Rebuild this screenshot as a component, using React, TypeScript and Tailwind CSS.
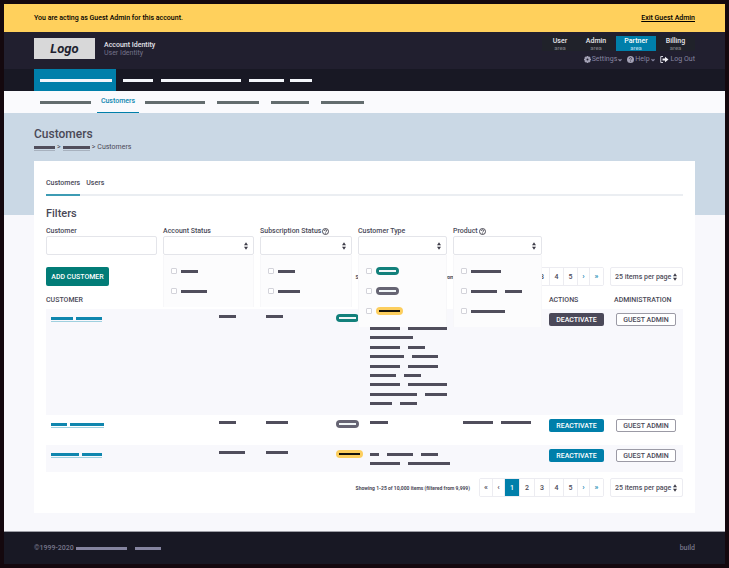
import React, { useState } from "react";

type Tone = "teal" | "gray" | "yellow";

const barTones = {
  dark: "bg-[#504e5c]",
  light: "bg-[#f3f6fb]",
  slate: "bg-[#636c6e]",
  link: "bg-[#0f86ae]",
  muted: "bg-[#8584a0]",
};

function Bars({ widths, tone = "dark", gap = "gap-2" }: { widths: number[]; tone?: keyof typeof barTones; gap?: string }) {
  return (
    <span className={`flex ${gap}`}>
      {widths.map((w, i) => (
        <span key={i} className={`block h-[3px] shrink-0 ${barTones[tone]}`} style={{ width: w }} />
      ))}
    </span>
  );
}

function Badge({ tone }: { tone: Tone }) {
  const outer = {
    teal: "bg-[#12807b] w-[23px]",
    gray: "bg-[#666473] w-[23px]",
    yellow: "bg-[#fcce5e] w-[27px]",
  }[tone];
  return (
    <span className={`flex h-2 items-center rounded-full px-[3px] ${outer}`}>
      <span className={`block h-[2px] w-full ${tone === "yellow" ? "bg-[#14120c]" : "bg-[#f2f7f8]"}`} />
    </span>
  );
}

function SortArrows() {
  return (
    <svg viewBox="0 0 4 8" className="pointer-events-none absolute top-1/2 right-[6px] h-2 w-1 -translate-y-1/2" aria-hidden="true">
      <path d="M2 0.3 4 3.3H0zM2 7.7 0 4.7h4z" fill="#3e3d49" />
    </svg>
  );
}

function HelpIcon() {
  return (
    <svg viewBox="0 0 14 14" className="h-[7px] w-[7px]" fill="none" stroke="#3a3945" strokeWidth="1.8" aria-hidden="true">
      <circle cx="7" cy="7" r="6" />
      <path d="M4.800 5.600a2.200 2 0 1 1 3 1.800c-.6.3-.8.6-.8 1.200M7 9.900v1.300" />
    </svg>
  );
}

function FilterSelect({ id, label, help, children }: { id: string; label: string; help?: boolean; children: React.ReactNode }) {
  return (
    <div className="relative min-w-0">
      <label htmlFor={id} className="flex h-2 items-center gap-px whitespace-nowrap">
        {label}
        {help && <HelpIcon />}
      </label>
      <div className="relative mt-px">
        <select id={id} className="block h-[19px] w-full appearance-none rounded-[2px] border border-[#e4e5ea] bg-white">
          <option value="" />
        </select>
        <SortArrows />
      </div>
      <ul className="absolute top-full left-0 z-10 w-full border-x border-[#f7f7f9] bg-[#fcfcfd] pt-[6px] pb-[6px] pl-[7px]">
        {children}
      </ul>
    </div>
  );
}

function Option({ name, children }: { name: string; children: React.ReactNode }) {
  return (
    <li>
      <label className="flex h-5 items-center gap-1">
        <input type="checkbox" aria-label={name} className="size-[6px] shrink-0 appearance-none rounded-[1px] border border-[#d3d3da] bg-white checked:bg-[#007faa]" />
        {children}
      </label>
    </li>
  );
}

const pages = [
  { label: "«", style: "w-[13px] bg-white text-[8px]" },
  { label: "‹", style: "w-3 bg-white text-[8px]" },
  { label: "1", style: "w-[15px] bg-[#007faa] text-white" },
  { label: "2", style: "w-[15px] bg-white" },
  { label: "3", style: "w-[15px] bg-white" },
  { label: "4", style: "w-[14px] bg-white" },
  { label: "5", style: "w-[14px] bg-white" },
  { label: "›", style: "w-3 bg-white text-[8px] text-[#0e86b0]" },
  { label: "»", style: "w-[13px] bg-white text-[8px] text-[#0e86b0]" },
];

function Pager({ id }: { id: string }) {
  return (
    <div className="flex items-center justify-end">
      <p className="mr-[9px] text-[5px] font-bold whitespace-nowrap">Showing 1-25 of 10,000 items (filtered from 9,999)</p>
      <nav aria-label="Pages" className="flex h-[19px] divide-x divide-[#ececf1] rounded-[2px] border border-[#ececf1]">
        {pages.map((p) => (
          <button key={p.label} type="button" className={`h-full font-medium ${p.style}`}>
            {p.label}
          </button>
        ))}
      </nav>
      <div className="relative ml-[6px]">
        <select id={id} aria-label="Items per page" className="block h-[19px] w-[73px] appearance-none rounded-[2px] border border-[#ececf1] bg-white px-1 font-medium text-[#504e5c]">
          <option>25 items per page</option>
          <option>50 items per page</option>
        </select>
        <SortArrows />
      </div>
    </div>
  );
}

interface Row {
  id: string;
  link: number[];
  account: number;
  subscription: number;
  badge: Tone;
  types: number[][];
  typesClass: string;
  product: number[];
  active: boolean;
  height: string;
}

const rows: Row[] = [
  {
    id: "r1",
    link: [22, 26],
    account: 17,
    subscription: 17,
    badge: "teal",
    types: [[30, 39], [43], [30, 17], [34, 26], [30, 30], [26, 17], [30, 39], [47, 22], [22, 17]],
    typesClass: "mt-[14px] h-[78px]",
    product: [],
    active: true,
    height: "h-[106px]",
  },
  { id: "r2", link: [16, 34], account: 17, subscription: 22, badge: "gray", types: [[18]], typesClass: "mt-[2px]", product: [30, 30], active: false, height: "h-[30px]" },
  { id: "r3", link: [28, 20], account: 26, subscription: 22, badge: "yellow", types: [[9, 26, 17], [30, 42]], typesClass: "mt-1 h-3", product: [], active: false, height: "h-[27px]" },
];

const columns = ["w-[168px]", "w-[47px]", "w-[70px]", "w-[34px]", "w-[93px]", "w-[86px]", "w-[65px]", "w-[74px]"];

function CustomerTable() {
  return (
    <table className="mt-[10px] w-full table-fixed text-left">
      <colgroup>
        {columns.map((c, i) => (
          <col key={i} className={c} />
        ))}
      </colgroup>
      <thead>
        <tr className="h-[13px] align-top leading-2">
          <th scope="col" className="font-medium">CUSTOMER</th>
          <td colSpan={5} />
          <th scope="col" className="pl-[5px] font-medium">ACTIONS</th>
          <th scope="col" className="pl-[5px] font-medium">ADMINISTRATION</th>
        </tr>
      </thead>
      <tbody className="[&>tr:nth-child(odd)]:bg-[#f8f8fc] [&_td]:pt-1 [&_td]:pl-[5px] [&_td:last-child]:pl-[7px]">
        {rows.map((r) => (
          <tr key={r.id} className={`align-top ${r.height}`}>
            <td>
              <a href="#" aria-label="Customer" className="mt-1 inline-block border-b border-[#9fd0df] pb-px align-top">
                <Bars widths={r.link} tone="link" gap="gap-[3px]" />
              </a>
            </td>
            <td><div className="pt-[2px]"><Bars widths={[r.account]} /></div></td>
            <td><div className="pt-[2px]"><Bars widths={[r.subscription]} /></div></td>
            <td><div className="pt-px"><Badge tone={r.badge} /></div></td>
            <td>
              <div className={`flex flex-col justify-between ${r.typesClass}`}>
                {r.types.map((t, i) => (
                  <Bars key={i} widths={t} />
                ))}
              </div>
            </td>
            <td><div className="pt-[2px]"><Bars widths={r.product} /></div></td>
            <td>
              <button type="button" className={`block h-[13px] w-[55px] rounded-[2px] font-medium text-white ${r.active ? "bg-[#4b4959]" : "bg-[#007faa]"}`}>
                {r.active ? "DEACTIVATE" : "REACTIVATE"}
              </button>
            </td>
            <td>
              <button type="button" className="block h-[13px] w-[60px] rounded-[2px] border border-[#9b9aa5] bg-white font-medium">GUEST ADMIN</button>
            </td>
          </tr>
        ))}
      </tbody>
    </table>
  );
}

function Chevron() {
  return (
    <svg viewBox="0 0 8 8" className="size-1" fill="none" stroke="currentColor" strokeWidth="2.2" aria-hidden="true">
      <path d="m1 2.500 3 3 3-3" />
    </svg>
  );
}

const areas = [
  { name: "User", width: "w-9" },
  { name: "Admin", width: "w-9" },
  { name: "Partner", width: "w-10" },
  { name: "Billing", width: "w-[39px]" },
];

function Header() {
  return (
    <header>
      <div className="flex h-[37px] justify-between bg-[#211f2f] px-[30px]">
        <div className="flex pt-[6px]">
          <div className="flex h-[21px] w-[61px] items-center justify-center bg-[#d8d8d9] text-[13px] font-bold text-[#211f2f] italic">Logo</div>
          <div className="ml-[9px] pt-[3px] leading-2">
            <p className="font-medium text-[#e3e2ea]">Account Identity</p>
            <p className="text-[#74728a]">User Identity</p>
          </div>
        </div>
        <div className="flex flex-col items-end pt-1">
          <nav aria-label="Areas" className="flex">
            {areas.map((a) => (
              <a
                key={a.name}
                href="#"
                className={`flex h-[15px] flex-col items-center pt-[2px] ${a.width} ${
                  a.name === "Partner" ? "bg-[#007faa] text-white" : "bg-[#20222a] text-[#e6e6ea]"
                } ${a.name === "Admin" ? "mr-[2px]" : ""}`}
              >
                <span className="leading-[7px] font-medium">{a.name}</span>
                <span className={`text-[6px] leading-[6px] ${a.name === "Partner" ? "text-[#b5dfef]" : "text-[#7f8088]"}`}>area</span>
              </a>
            ))}
          </nav>
          <div className="mt-1 flex items-center gap-[5px] leading-[9px] text-[#8785a0]">
            <button type="button" className="flex items-center gap-px">
              <svg viewBox="0 0 16 16" className="size-[7px]" aria-hidden="true">
                <circle cx="8" cy="8" r="4.500" fill="none" stroke="#a3a1b5" strokeWidth="4.500" />
                <path d="M8 0v3M8 13v3M0 8h3M13 8h3M2.300 2.300l2 2M11.700 11.700l2 2M2.300 13.700l2-2M11.700 4.300l2-2" stroke="#a3a1b5" strokeWidth="3.500" />
              </svg>
              Settings
              <Chevron />
            </button>
            <button type="button" className="flex items-center gap-px">
              <svg viewBox="0 0 16 16" className="size-[7px]" aria-hidden="true">
                <circle cx="8" cy="8" r="8" fill="#a3a1b5" />
                <path d="M5.500 6.200a2.500 2.300 0 1 1 3.400 2c-.7.3-.9.6-.9 1.300M8 11v1.800" fill="none" stroke="#211f2f" strokeWidth="1.500" />
              </svg>
              Help
              <Chevron />
            </button>
            <button type="button" className="flex items-center gap-[2px]">
              <svg viewBox="0 0 18 14" className="h-[7px] w-[9px]" aria-hidden="true">
                <path d="M6 1H1.500v12H6" fill="none" stroke="#d5d4df" strokeWidth="2" />
                <path d="M5 5h5V1.500L17 7l-7 5.500V9H5z" fill="#f2f2f6" />
              </svg>
              Log Out
            </button>
          </div>
        </div>
      </div>
      <nav aria-label="Main" className="flex h-[22px] items-center bg-[#181824] px-[30px]">
        <a href="#" aria-label="Section" className="flex h-full w-[82px] items-center bg-[#007faa] pl-[6px]">
          <Bars widths={[72]} tone="light" />
        </a>
        <a href="#" aria-label="Section" className="ml-[7px]"><Bars widths={[30]} tone="light" /></a>
        <a href="#" aria-label="Section" className="ml-2"><Bars widths={[80]} tone="light" /></a>
        <a href="#" aria-label="Section" className="ml-2"><Bars widths={[35]} tone="light" /></a>
        <a href="#" aria-label="Section" className="ml-[6px]"><Bars widths={[22]} tone="light" /></a>
      </nav>
      <nav aria-label="Secondary" className="flex h-[22px] items-center bg-[#fafafd] px-[30px]">
        <a href="#" aria-label="Subsection" className="ml-[6px]"><Bars widths={[51]} tone="slate" /></a>
        <a href="#" className="mx-[6px] flex h-full w-[42px] justify-center border-b border-[#007faa] pt-[6px] leading-2 font-medium text-[#0e86b0]">Customers</a>
        <a href="#" aria-label="Subsection"><Bars widths={[60]} tone="slate" /></a>
        <a href="#" aria-label="Subsection" className="ml-3"><Bars widths={[42]} tone="slate" /></a>
        <a href="#" aria-label="Subsection" className="ml-3"><Bars widths={[38]} tone="slate" /></a>
        <a href="#" aria-label="Subsection" className="ml-3"><Bars widths={[43]} tone="slate" /></a>
      </nav>
    </header>
  );
}

export default function App() {
  const [query, setQuery] = useState("");
  return (
    <div className="flex min-h-screen flex-col border-4 border-[#14080e] bg-[#f8f8fc] font-['Roboto',sans-serif] text-[7px] leading-2 text-[#4a4957]">
      <div className="flex h-7 items-center justify-between bg-[#ffd05c] px-[30px] font-medium text-black">
        <p>You are acting as Guest Admin for this account.</p>
        <a href="#" className="underline">Exit Guest Admin</a>
      </div>
      <Header />
      <section className="h-[102px] shrink-0 bg-[#cad8e5] px-[30px] pt-[14px]">
        <h1 className="text-[12px] leading-[14px] font-medium">Customers</h1>
        <nav aria-label="Breadcrumb" className="mt-[2px] flex items-center gap-[2px]">
          <a href="#" aria-label="Home" className="border-b border-[#a7b1be] pt-[2px] pb-px"><Bars widths={[21]} /></a>
          <span>&gt;</span>
          <a href="#" aria-label="Section" className="border-b border-[#a7b1be] pt-[2px] pb-px"><Bars widths={[27]} /></a>
          <span>&gt;</span>
          <span>Customers</span>
        </nav>
      </section>
      <main className="mx-[30px] -mt-[54px] mb-[18px] grow bg-white px-3 pt-[18px] pb-4">
        <div className="flex gap-[6px] border-b-2 border-[#ebeef2] leading-2">
          <a href="#" className="-mb-[2px] border-b-2 border-[#3d9cb4] pb-[7px] font-medium">Customers</a>
          <a href="#" className="font-medium">Users</a>
        </div>
        <h2 className="mt-3 text-[11px] leading-3 font-medium">Filters</h2>
        <form className="mt-[7px] grid grid-cols-[111fr_91fr_92fr_89fr_89fr_135fr] gap-[6px] font-medium" onSubmit={(e) => e.preventDefault()}>
          <div className="min-w-0">
            <label htmlFor="customer" className="block h-2">Customer</label>
            <input id="customer" value={query} onChange={(e) => setQuery(e.target.value)} className="mt-px block h-[19px] w-full rounded-[2px] border border-[#e4e5ea] px-1 outline-none" />
          </div>
          <FilterSelect id="account-status" label="Account Status">
            <Option name="Status 1"><Bars widths={[17]} /></Option>
            <Option name="Status 2"><Bars widths={[26]} /></Option>
          </FilterSelect>
          <FilterSelect id="subscription-status" label="Subscription Status" help>
            <Option name="Status 1"><Bars widths={[17]} /></Option>
            <Option name="Status 2"><Bars widths={[22]} /></Option>
          </FilterSelect>
          <FilterSelect id="customer-type" label="Customer Type">
            <Option name="Type 1"><Badge tone="teal" /></Option>
            <Option name="Type 2"><Badge tone="gray" /></Option>
            <Option name="Type 3"><Badge tone="yellow" /></Option>
          </FilterSelect>
          <FilterSelect id="product" label="Product" help>
            <Option name="Product 1"><Bars widths={[30]} /></Option>
            <Option name="Product 2"><Bars widths={[26, 17]} /></Option>
            <Option name="Product 3"><Bars widths={[34]} /></Option>
          </FilterSelect>
        </form>
        <div className="mt-3 flex items-center justify-between">
          <button type="button" className="h-[19px] w-[63px] rounded-[2px] bg-[#027c77] font-medium text-white">ADD CUSTOMER</button>
          <Pager id="per-page-top" />
        </div>
        <CustomerTable />
        <div className="mt-[6px]">
          <Pager id="per-page-bottom" />
        </div>
      </main>
      <footer className="flex h-[33px] shrink-0 items-center justify-between border-t border-[#9d9ea6] bg-[#181824] px-[30px] font-medium text-[#77768a]">
        <p className="flex items-center gap-[2px]">
          ©1999-2020
          <Bars widths={[51, 26]} tone="muted" />
        </p>
        <p>build</p>
      </footer>
    </div>
  );
}
